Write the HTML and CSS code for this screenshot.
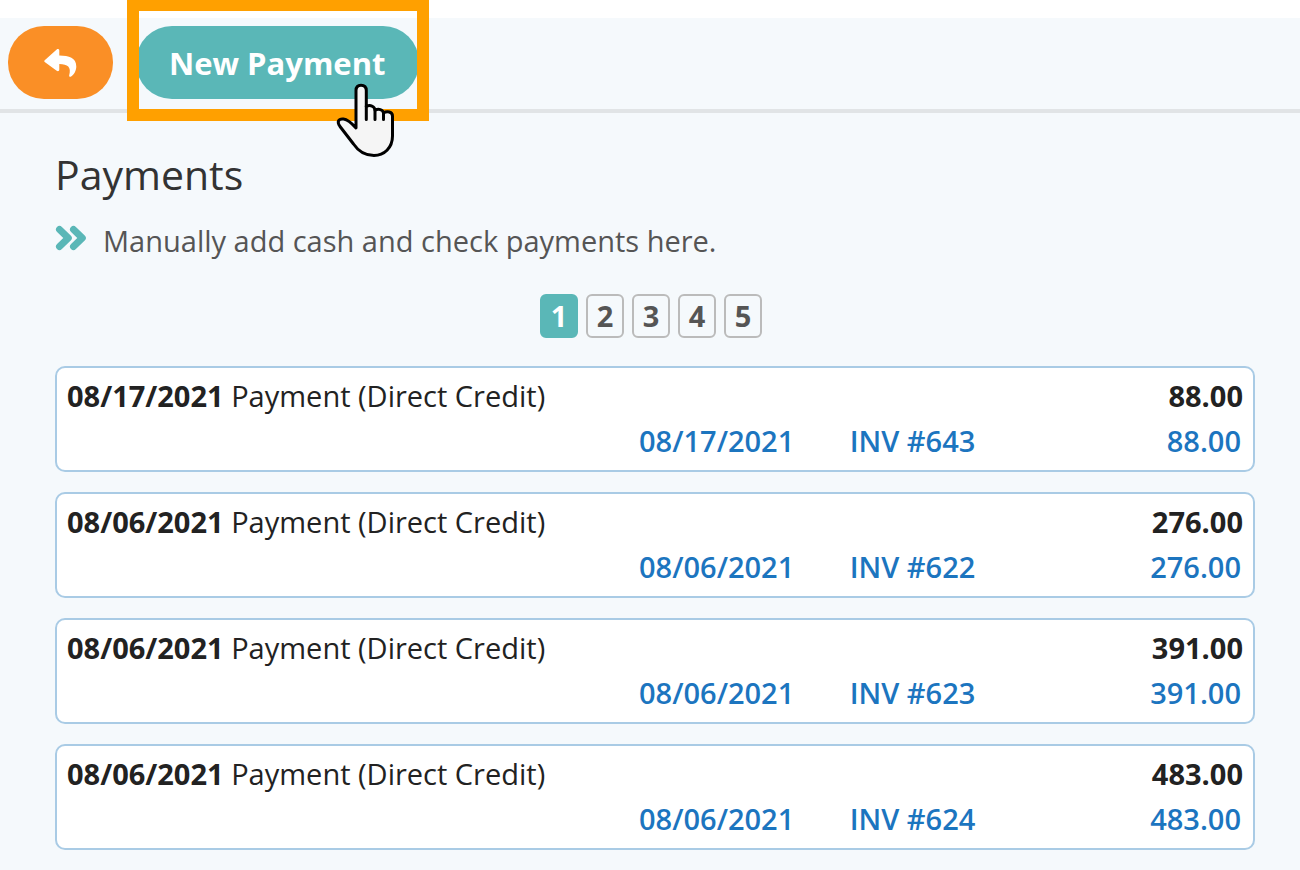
FILE: index.html
```html
<!DOCTYPE html>
<html lang="en">
<head>
<meta charset="utf-8">
<title>Payments</title>
<link rel="stylesheet" href="styles.css">
</head>
<body>
<header class="toolbar">
  <button class="btn btn-back" type="button" aria-label="Back">
    <svg class="back-icon" viewBox="0 0 34 30" aria-hidden="true"><path d="M.7 12.300 12.700 1.600C13.800.6 15.300 1.200 15.300 2.600V7.600C25 7.700 32.300 9.800 32.300 18.600c0 4.200-2.300 8.200-5.200 10-1 .6-2.300-.1-1.900-1.400 2.400-8.200-1.500-11.200-9.900-11.300V21.600c0 1.500-1.500 2-2.600 1.100L.7 14C.1 13.500.1 12.800 .7 12.300Z"/></svg>
  </button>
  <div class="highlighted">
    <button class="btn btn-new" type="button">New Payment</button>
    <span class="frame"></span>
    <svg class="pointer" viewBox="0 0 60 76" aria-hidden="true"><path d="M21 46V8.500C21 5 22.500 3.200 26 3.200S31.300 5 31.300 8.500V24.500C35 22.500 39.800 24 40 28.300C43.500 26.300 48 27.500 48.500 31C52 28.800 57.500 29.600 57.500 34V54C57.500 66 49 73.500 39 73.500C30 73.500 23.500 69.500 18.500 62L5 44.500C1.500 39.500 3.500 36.500 8.500 37C13 37.500 17 41.500 21 46Z"/><path d="M31.300 24V37.500M40 28V37.500M48.500 31V37.500"/></svg>
  </div>
</header>
<main class="page">
  <h1 class="title">Payments</h1>
  <p class="hint">
    <svg class="hint-icon" viewBox="0 0 32 26" aria-hidden="true"><path d="M4.500 4.500 13.300 13 4.500 21.500M18.500 4.500 27.300 13 18.500 21.500"/></svg>
    Manually add cash and check payments here.
  </p>
  <nav class="pager" aria-label="Pages">
    <button class="page-btn current" type="button" aria-current="page">1</button>
    <button class="page-btn" type="button">2</button>
    <button class="page-btn" type="button">3</button>
    <button class="page-btn" type="button">4</button>
    <button class="page-btn" type="button">5</button>
  </nav>
  <section class="list">
    <article class="card">
      <div class="summary"><span><b>08/17/2021</b> Payment (Direct Credit)</span><b>88.00</b></div>
      <div class="invoice"><span>08/17/2021</span><span>INV #643</span><span class="amount">88.00</span></div>
    </article>
    <article class="card">
      <div class="summary"><span><b>08/06/2021</b> Payment (Direct Credit)</span><b>276.00</b></div>
      <div class="invoice"><span>08/06/2021</span><span>INV #622</span><span class="amount">276.00</span></div>
    </article>
    <article class="card">
      <div class="summary"><span><b>08/06/2021</b> Payment (Direct Credit)</span><b>391.00</b></div>
      <div class="invoice"><span>08/06/2021</span><span>INV #623</span><span class="amount">391.00</span></div>
    </article>
    <article class="card">
      <div class="summary"><span><b>08/06/2021</b> Payment (Direct Credit)</span><b>483.00</b></div>
      <div class="invoice"><span>08/06/2021</span><span>INV #624</span><span class="amount">483.00</span></div>
    </article>
  </section>
</main>
</body>
</html>
```
FILE: styles.css
```css
* { box-sizing: border-box; }
body {
  margin: 0;
  background: #f5f9fc;
  color: #222;
  font-family: "Open Sans", "Noto Sans", sans-serif;
  font-size: 29px;
  line-height: 45px;
}
.toolbar {
  display: flex;
  gap: 23px;
  padding: 8px 8px 10px;
  border-top: 18px solid #fff;
  border-bottom: 4px solid #e1e4e6;
}
.btn {
  border: 0;
  border-radius: 36px;
  height: 73px;
  color: #fff;
  font: 700 31px/44px "Open Sans", "Noto Sans", sans-serif;
}
.btn-back {
  display: flex;
  align-items: center;
  justify-content: center;
  width: 105px;
  background: #fa8f26;
}
.back-icon { width: 34px; height: 30px; fill: #fff; }
.highlighted { position: relative; }
.btn-new { padding: 0 33px; background: #5ab7b7; }
.frame {
  position: absolute;
  inset: -27px -10px -22px -9px;
  border: 12px solid #ffa000;
}
.pointer {
  position: absolute;
  right: 24px;
  top: 56px;
  width: 60px;
  height: 76px;
  fill: #f5f5f5;
  stroke: #000;
  stroke-width: 3;
  stroke-linejoin: round;
  stroke-linecap: round;
}
.page { padding: 32px 45px 20px 55px; }
.title {
  margin: 0;
  color: #333;
  font-size: 41px;
  font-weight: 400;
  line-height: 58px;
}
.hint {
  display: flex;
  gap: 16px;
  margin: 15px 0 0;
  color: #555;
}
.hint-icon {
  flex: none;
  width: 32px;
  height: 26px;
  margin-top: 7px;
  fill: none;
  stroke: #5ab7b7;
  stroke-width: 7;
  stroke-linejoin: round;
  stroke-linecap: round;
}
.pager {
  display: flex;
  justify-content: center;
  gap: 8px;
  margin: 31px 8px 28px 0;
}
.page-btn {
  width: 38px;
  height: 44px;
  padding: 0;
  border: 2px solid #bbb;
  border-radius: 6px;
  background: none;
  color: #555;
  font: 700 29px/38px "Open Sans", "Noto Sans", sans-serif;
}
.current { border-color: #5ab7b7; background: #5ab7b7; color: #fff; }
.list { display: grid; gap: 20px; }
.card {
  padding: 5px 10px 7px;
  border: 2px solid #a9cbe5;
  border-radius: 10px;
  background: #fff;
}
.summary { display: flex; justify-content: space-between; }
.invoice {
  display: grid;
  grid-template-columns: 7fr 6fr 7fr;
  padding-left: 572px;
  padding-right: 2px;
  color: #1c75bf;
  font-weight: 600;
}
.amount { text-align: right; }
```
